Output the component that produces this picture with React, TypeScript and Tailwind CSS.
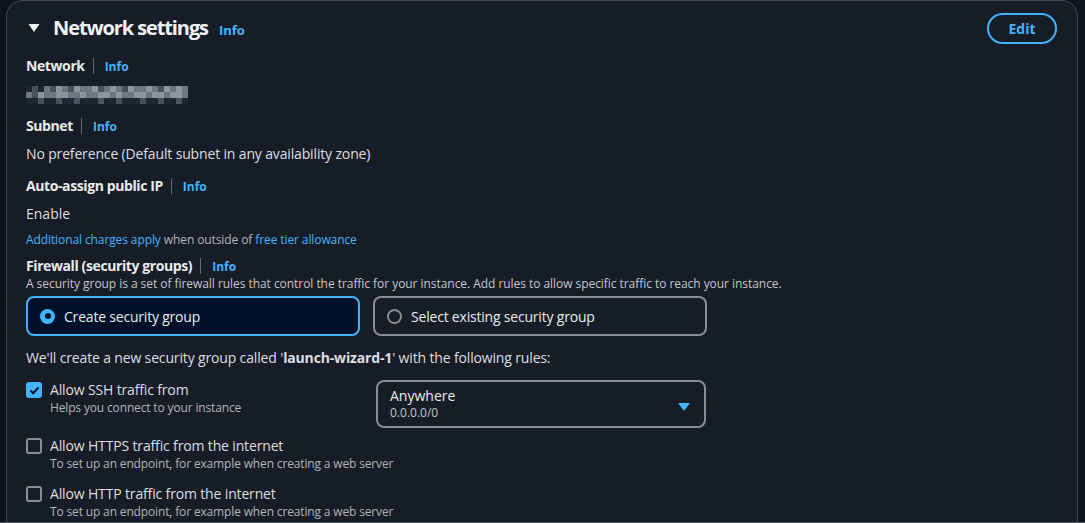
import React from 'react';

const mosaic = [
  [0, 1, 0, 2, 1, 3, 2, 1, 3, 2, 2, 3, 1, 2, 3, 2, 1, 3, 2, 2, 3, 2, 1, 3, 2, 3, 2],
  [2, 1, 3, 2, 2, 3, 3, 2, 2, 3, 2, 2, 3, 3, 2, 3, 2, 2, 3, 3, 2, 3, 3, 2, 3, 3, 2],
  [0, 0, 1, 0, 0, 1, 0, 0, 1, 0, 0, 0, 1, 0, 0, 1, 0, 0, 0, 1, 0, 0, 1, 0, 0, 1, 0],
];
const shades = ['#1f2630', '#4a515c', '#6f7680', '#8e949c'];

function Info({ className = '' }: { className?: string }) {
  return <span className={`text-[12px] leading-5 font-bold text-[#42b4ff] ${className}`}>Info</span>;
}

function Label({ text }: { text: string }) {
  return (
    <div className="flex items-center h-5">
      <span className="text-[14px] leading-5 font-bold tracking-[-0.4px] text-[#e9ebed]">{text}</span>
      <span className="ml-[8px] h-[16px] w-px bg-[#5f6b7a]" />
      <Info className="ml-[11px] mt-[2px]" />
    </div>
  );
}

function Check({ checked }: { checked?: boolean }) {
  if (checked) {
    return (
      <span className="flex w-4 h-4 shrink-0 items-center justify-center rounded-[3px] bg-[#42b4ff]">
        <svg width="11" height="9" viewBox="0 0 11 9" fill="none">
          <path d="M1.5 4.5L4.2 7.2L9.5 1.5" stroke="#0f141a" strokeWidth="2" />
        </svg>
      </span>
    );
  }
  return <span className="block w-4 h-4 shrink-0 rounded-[3px] border-2 border-[#8c8c94]" />;
}

function CheckRow({ title, desc, checked }: { title: string; desc: string; checked?: boolean }) {
  return (
    <div className="flex gap-[8px]">
      <div className="pt-[2px]">
        <Check checked={checked} />
      </div>
      <div className="flex flex-col tracking-[-0.15px]">
        <span className="text-[14px] leading-5 text-[#dedee3]">{title}</span>
        <span className="text-[12px] leading-4 text-[#b4b4bb]">{desc}</span>
      </div>
    </div>
  );
}

export default function App() {
  return (
    <div className="w-full h-[523px] overflow-hidden bg-[#0f141a] border-b border-[#545b64] font-['Open_Sans',sans-serif]">
      <div className="ml-[6px] mr-[7px] h-[540px] rounded-t-[16px] border border-[#424650] bg-[#161d26] pl-[19px] pr-[20px] pt-[11px]">
        <div className="flex h-8 items-center justify-between">
          <div className="flex items-center">
            <svg width="12" height="10" viewBox="0 0 12 10" className="ml-[2px] mr-[13px]">
              <path d="M0.5 1H11.5L6 9Z" fill="#f3f3f7" />
            </svg>
            <span className="text-[20px] font-bold text-[#f3f3f7] tracking-[-1.1px]">Network settings</span>
            <Info className="ml-[11px] mt-[3px] text-[13px]" />
          </div>
          <button className="h-[31px] w-[70px] rounded-full border-2 border-[#42b4ff] text-[14px] font-bold text-[#42b4ff]">
            Edit
          </button>
        </div>

        <div className="mt-[12px]">
          <Label text="Network" />
        </div>
        <svg width="168" height="18" viewBox="0 0 168 18" className="mt-[10px] -ml-[2px] block">
          {mosaic.map((row, r) =>
            row.map((v, c) => (
              <rect key={`${r}-${c}`} x={c * 6 + 2} y={r * 6} width="6" height="6" fill={shades[v]} />
            ))
          )}
        </svg>

        <div className="mt-[12px]">
          <Label text="Subnet" />
        </div>
        <div className="mt-[8px] text-[14px] leading-5 tracking-[-0.15px] text-[#dedee3]">No preference (Default subnet in any availability zone)</div>

        <div className="mt-[12px]">
          <Label text="Auto-assign public IP" />
        </div>
        <div className="mt-[8px] text-[14px] leading-5 text-[#dedee3]">Enable</div>
        <div className="mt-[8px] text-[12px] leading-4 tracking-[-0.1px] text-[#b4b4bb]">
          <span className="text-[#42b4ff]">Additional charges apply</span> when outside of{' '}
          <span className="text-[#42b4ff]">free tier allowance</span>
        </div>

        <div className="mt-[8px]">
          <Label text="Firewall (security groups)" />
        </div>
        <div className="text-[12px] leading-4 tracking-[-0.05px] text-[#c6c6cd]">
          A security group is a set of firewall rules that control the traffic for your instance. Add rules to allow specific traffic to reach your instance.
        </div>

        <div className="mt-[4px] flex gap-[13px]">
          <div className="flex h-10 w-[334px] items-center gap-[9px] rounded-[8px] border-2 border-[#42b4ff] bg-[#001129] pl-[12px]">
            <span className="flex h-[15px] w-[15px] items-center justify-center rounded-full bg-[#42b4ff]">
              <span className="h-[6px] w-[6px] rounded-full bg-[#0f141a]" />
            </span>
            <span className="text-[14px] tracking-[-0.2px] text-[#e9ebed]">Create security group</span>
          </div>
          <div className="flex h-10 w-[334px] items-center gap-[9px] rounded-[8px] border-2 border-[#8c8c94] pl-[12px]">
            <span className="h-[15px] w-[15px] rounded-full border-2 border-[#8c8c94]" />
            <span className="text-[14px] tracking-[-0.2px] text-[#e9ebed]">Select existing security group</span>
          </div>
        </div>

        <div className="mt-[12px] text-[14px] leading-5 tracking-[-0.15px] text-[#dedee3]">
          We'll create a new security group called '<span className="font-bold">launch-wizard-1</span>' with the following rules:
        </div>

        <div className="mt-[12px] flex">
          <div className="w-[350px]">
            <CheckRow checked title="Allow SSH traffic from" desc="Helps you connect to your instance" />
          </div>
          <div className="flex h-12 w-[330px] items-center justify-between rounded-[8px] border-2 border-[#8c8c94] pl-[12px] pr-[14px]">
            <div className="flex flex-col">
              <span className="text-[14px] leading-[18px] text-[#e9ebed]">Anywhere</span>
              <span className="text-[12px] leading-4 text-[#c6c6cd]">0.0.0.0/0</span>
            </div>
            <svg width="12" height="8" viewBox="0 0 12 8" className="mt-[6px]">
              <path d="M0 0H12L6 8Z" fill="#42b4ff" />
            </svg>
          </div>
        </div>

        <div className="mt-[8px]">
          <CheckRow title="Allow HTTPS traffic from the internet" desc="To set up an endpoint, for example when creating a web server" />
        </div>
        <div className="mt-[12px]">
          <CheckRow title="Allow HTTP traffic from the internet" desc="To set up an endpoint, for example when creating a web server" />
        </div>
      </div>
    </div>
  );
}
